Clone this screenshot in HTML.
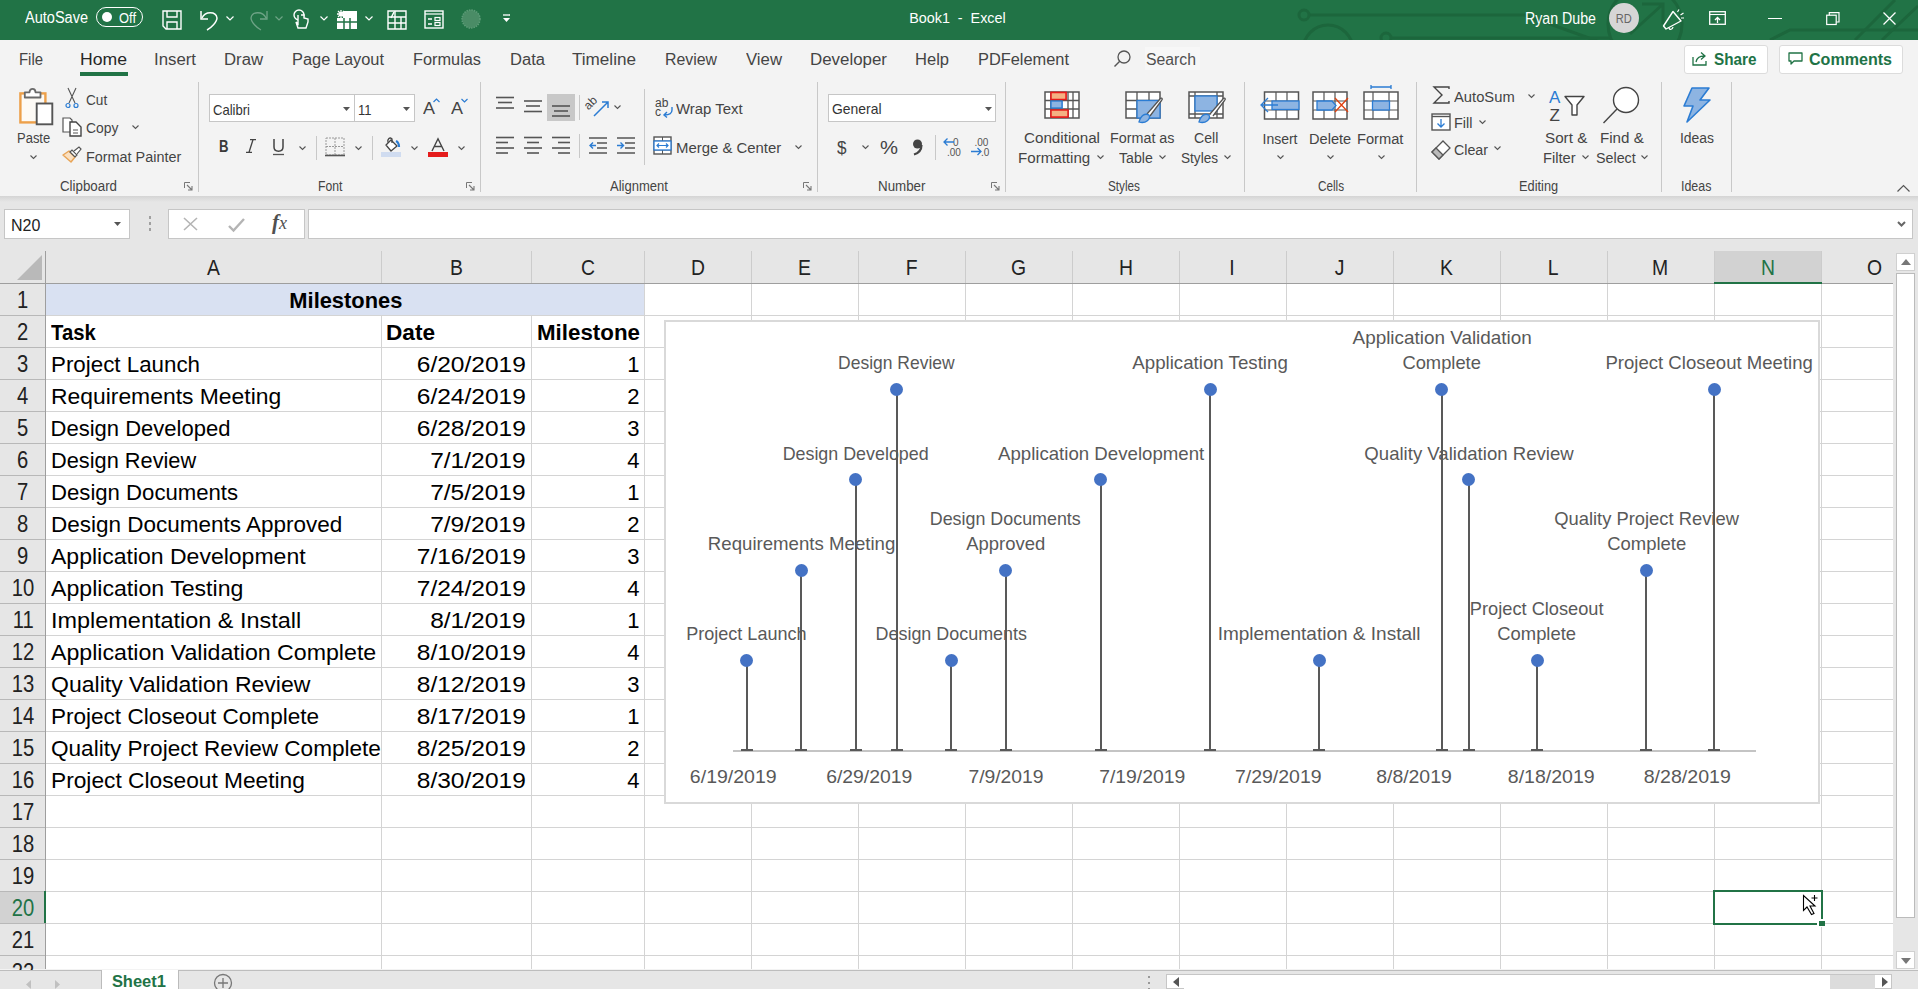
<!DOCTYPE html><html><head><meta charset="utf-8"><style>
html,body{margin:0;padding:0;}
body{width:1918px;height:989px;overflow:hidden;position:relative;background:#f3f3f3;font-family:"Liberation Sans",sans-serif;}
.t{position:absolute;white-space:nowrap;line-height:1.149;}
.b{position:absolute;}
svg.b{overflow:visible}
</style></head><body>
<div class="b" style="left:0px;top:0px;width:1918px;height:40px;background:#217346"></div>
<svg class="b" style="left:1280px;top:0px;" width="638" height="40" viewBox="0 0 638 40"><g stroke="#1c663c" stroke-width="3" fill="none"><path d="M29 15 H245 L320 42"/><circle cx="24" cy="15" r="5"/><circle cx="48" cy="50" r="25"/><circle cx="106" cy="38" r="5"/><path d="M111 38 H330"/><circle cx="365" cy="24" r="37"/><path d="M350 34 L382 5 M362 4 H383 V24"/><path d="M490 40 L510 30 H638"/><path d="M575 40 L615 0"/><path d="M602 40 L638 6"/></g></svg>
<div class="t" style="left:25.00px;top:8.96px;font-size:16px;color:#ffffff;transform:scaleX(0.9080);transform-origin:left 50%;">AutoSave</div>
<div class="b" style="left:96px;top:7px;width:47px;height:20px;border:1.3px solid #fff;border-radius:10px;box-sizing:border-box"></div>
<div class="b" style="left:102px;top:12px;width:10px;height:10px;background:#fff;border-radius:50%"></div>
<div class="t" style="left:119.00px;top:9.81px;font-size:14px;color:#ffffff;transform:scaleX(0.9231);transform-origin:left 50%;">Off</div>
<svg class="b" style="left:162px;top:10px;" width="20" height="20" viewBox="0 0 20 20"><path d="M1 1 H19 V19 H4 L1 16 Z" stroke="#fff" stroke-width="1.4" fill="none"/><path d="M5 1 V7 H15 V1" stroke="#fff" stroke-width="1.4" fill="none"/><path d="M5 19 V12 H15 V19" stroke="#fff" stroke-width="1.4" fill="none"/></svg>
<svg class="b" style="left:199px;top:9px;" width="20" height="21" viewBox="0 0 20 21"><path d="M3 9 C6 2 17 2 18 9 C18 13 12 19 8 21" stroke="#fff" stroke-width="1.5" fill="none"/><path d="M2 2 V10 H9" stroke="#fff" stroke-width="1.5" fill="none"/></svg>
<svg class="b" style="left:226px;top:16px;" width="8" height="5" viewBox="0 0 8 5"><path d="M0.5 0.5 L4 4 L7.5 0.5" stroke="#fff" stroke-width="1.2" fill="none" opacity="1"/></svg>
<svg class="b" style="left:249px;top:9px;" width="20" height="21" viewBox="0 0 20 21"><path d="M17 9 C14 2 3 2 2 9 C2 13 8 19 12 21" stroke="#fff" stroke-width="1.3" fill="none" opacity="0.35"/><path d="M18 2 V10 H11" stroke="#fff" stroke-width="1.3" fill="none" opacity="0.35"/></svg>
<svg class="b" style="left:275px;top:16px;" width="8" height="5" viewBox="0 0 8 5"><path d="M0.5 0.5 L4 4 L7.5 0.5" stroke="#fff" stroke-width="1.2" fill="none" opacity="0.35"/></svg>
<svg class="b" style="left:293px;top:9px;" width="16" height="21" viewBox="0 0 16 21"><circle cx="6" cy="6" r="5" stroke="#fff" stroke-width="1.4" fill="none"/><path d="M5 6 V15 L3 13 L5 19 H13 L15 13 V10 L11 9 V6 L8 6" stroke="#fff" stroke-width="1.4" fill="#217346"/></svg>
<svg class="b" style="left:320px;top:16px;" width="8" height="5" viewBox="0 0 8 5"><path d="M0.5 0.5 L4 4 L7.5 0.5" stroke="#fff" stroke-width="1.2" fill="none" opacity="1"/></svg>
<svg class="b" style="left:337px;top:10px;" width="20" height="19" viewBox="0 0 20 19"><rect x="6" y="1" width="14" height="18" fill="#fff"/><rect x="0" y="8" width="20" height="11" fill="#fff"/><path d="M0 12 H20 M7 8 V19 M13 8 V19" stroke="#217346" stroke-width="1.5"/><path d="M4 0 V8 M0 4 H8 M1 1 L7 7 M7 1 L1 7" stroke="#fff" stroke-width="1.3"/></svg>
<svg class="b" style="left:365px;top:16px;" width="8" height="5" viewBox="0 0 8 5"><path d="M0.5 0.5 L4 4 L7.5 0.5" stroke="#fff" stroke-width="1.2" fill="none" opacity="1"/></svg>
<svg class="b" style="left:387px;top:10px;" width="20" height="19" viewBox="0 0 20 19"><path d="M1 1 H19 V19 H1 Z M1 7 H19 M1 13 H19 M8 1 V19 M14 7 V19" stroke="#fff" stroke-width="1.4" fill="none"/><path d="M4 8 L7 2" stroke="#fff" stroke-width="1.5"/></svg>
<svg class="b" style="left:424px;top:10px;" width="20" height="19" viewBox="0 0 20 19"><rect x="1" y="1" width="18" height="17" stroke="#fff" stroke-width="1.4" fill="none"/><path d="M1 4 H19" stroke="#fff" stroke-width="1.2"/><path d="M4 9 H8 M4 14 H8" stroke="#fff" stroke-width="1.5"/><rect x="11" y="7.5" width="5" height="3" stroke="#fff" stroke-width="1.2" fill="none"/><rect x="11" y="12.5" width="5" height="3" stroke="#fff" stroke-width="1.2" fill="none"/></svg>
<svg class="b" style="left:461px;top:9px;" width="20" height="20" viewBox="0 0 20 20"><circle cx="10" cy="10" r="9" fill="#4a8c66" stroke="#5d9c78" stroke-width="1.5" stroke-dasharray="1.5 1"/></svg>
<svg class="b" style="left:502px;top:14px;" width="9" height="9" viewBox="0 0 9 9"><path d="M1 1 H8" stroke="#fff" stroke-width="1.3"/><path d="M1 4 L4.5 8 L8 4 Z" fill="#fff"/></svg>
<div class="t" style="left:906.56px;top:8.88px;font-size:15px;color:#ffffff;transform:scaleX(0.9566);transform-origin:center 50%;">Book1&nbsp;&nbsp;-&nbsp;&nbsp;Excel</div>
<div class="t" style="left:1525.00px;top:9.96px;font-size:16px;color:#ffffff;transform:scaleX(0.8870);transform-origin:left 50%;">Ryan Dube</div>
<div class="b" style="left:1609px;top:3px;width:30px;height:30px;background:#d6d6d6;border-radius:50%"></div>
<div class="t" style="left:1615.33px;top:12.65px;font-size:12px;color:#666;transform:scaleX(0.9231);transform-origin:center 50%;">RD</div>
<svg class="b" style="left:1662px;top:9px;" width="22" height="21" viewBox="0 0 22 21"><path d="M1.5 17 L4 20 L19 12 L11 2.5 Z" stroke="#fff" stroke-width="1.4" fill="none" stroke-linejoin="round"/><path d="M7 18.5 C7 21 10.5 21 11 18" stroke="#fff" stroke-width="1.3" fill="none"/><path d="M15.5 3 L17 0.5 M18.5 6 L21.5 4 M19 9 L22 9" stroke="#fff" stroke-width="1.2"/></svg>
<svg class="b" style="left:1709px;top:11px;" width="17" height="14" viewBox="0 0 17 14"><rect x="0.7" y="0.7" width="15.6" height="12.6" stroke="#fff" stroke-width="1.3" fill="none"/><path d="M0.7 3.5 H16.3" stroke="#fff" stroke-width="1.1"/><path d="M8.5 12 V6.5 M6 9 L8.5 6.5 L11 9" stroke="#fff" stroke-width="1.3" fill="none"/></svg>
<div class="b" style="left:1768px;top:18px;width:14px;height:1.2px;background:#fff"></div>
<svg class="b" style="left:1825.5px;top:11.5px;" width="14" height="13" viewBox="0 0 14 13"><rect x="0.7" y="3.2" width="9.5" height="9.3" stroke="#fff" stroke-width="1.2" fill="none"/><path d="M3.3 3.2 V0.7 H13 V10 H10.2" stroke="#fff" stroke-width="1.2" fill="none"/></svg>
<svg class="b" style="left:1883px;top:11.5px;" width="13" height="13" viewBox="0 0 13 13"><path d="M0.5 0.5 L12.5 12.5 M12.5 0.5 L0.5 12.5" stroke="#fff" stroke-width="1.3"/></svg>
<div class="b" style="left:0px;top:40px;width:1918px;height:156px;background:#f3f3f3"></div>
<div class="t" style="left:19.00px;top:50.96px;font-size:16px;color:#444444;transform:scaleX(0.9309);transform-origin:left 50%;">File</div>
<div class="t" style="left:80.00px;top:50.96px;font-size:16px;color:#262626;transform:scaleX(1.1012);transform-origin:left 50%;">Home</div>
<div class="t" style="left:154.00px;top:50.96px;font-size:16px;color:#444444;transform:scaleX(1.0496);transform-origin:left 50%;">Insert</div>
<div class="t" style="left:224.00px;top:50.96px;font-size:16px;color:#444444;transform:scaleX(1.0445);transform-origin:left 50%;">Draw</div>
<div class="t" style="left:292.00px;top:50.96px;font-size:16px;color:#444444;transform:scaleX(1.0239);transform-origin:left 50%;">Page Layout</div>
<div class="t" style="left:413.00px;top:50.96px;font-size:16px;color:#444444;transform:scaleX(1.0198);transform-origin:left 50%;">Formulas</div>
<div class="t" style="left:510.00px;top:50.96px;font-size:16px;color:#444444;transform:scaleX(1.0356);transform-origin:left 50%;">Data</div>
<div class="t" style="left:572.00px;top:50.96px;font-size:16px;color:#444444;transform:scaleX(1.0690);transform-origin:left 50%;">Timeline</div>
<div class="t" style="left:665.00px;top:50.96px;font-size:16px;color:#444444;transform:scaleX(0.9912);transform-origin:left 50%;">Review</div>
<div class="t" style="left:746.00px;top:50.96px;font-size:16px;color:#444444;transform:scaleX(1.0468);transform-origin:left 50%;">View</div>
<div class="t" style="left:810.00px;top:50.96px;font-size:16px;color:#444444;transform:scaleX(1.0558);transform-origin:left 50%;">Developer</div>
<div class="t" style="left:915.00px;top:50.96px;font-size:16px;color:#444444;transform:scaleX(1.0332);transform-origin:left 50%;">Help</div>
<div class="t" style="left:978.00px;top:50.96px;font-size:16px;color:#444444;transform:scaleX(1.0233);transform-origin:left 50%;">PDFelement</div>
<div class="b" style="left:80px;top:72px;width:48px;height:4px;background:#217346"></div>
<svg class="b" style="left:1113px;top:50px;" width="18" height="18" viewBox="0 0 18 18"><circle cx="11" cy="7" r="6" stroke="#555" stroke-width="1.3" fill="none"/><path d="M7 11 L1.5 16.5" stroke="#555" stroke-width="1.5"/></svg>
<div class="b" style="left:1145px;top:47px;width:55px;height:23px;background:#f7f7f7"></div>
<div class="t" style="left:1146.00px;top:50.96px;font-size:16px;color:#505050;transform:scaleX(0.9863);transform-origin:left 50%;">Search</div>
<div class="b" style="left:1684px;top:45px;width:84px;height:29px;background:#fff;border:1px solid #dcdcdc;border-radius:3px;box-sizing:border-box"></div>
<svg class="b" style="left:1692px;top:51px;" width="16" height="15" viewBox="0 0 16 15"><path d="M1 6 V14 H14 V10" stroke="#217346" stroke-width="1.3" fill="none"/><path d="M4 11 C5 6 8 5 12 5 M9 1.5 L13 5 L9 8.5" stroke="#217346" stroke-width="1.3" fill="none"/></svg>
<div class="t" style="left:1713.50px;top:50.04px;font-size:17px;color:#217346;font-weight:bold;transform:scaleX(0.8995);transform-origin:left 50%;">Share</div>
<div class="b" style="left:1779px;top:45px;width:124px;height:29px;background:#fff;border:1px solid #dcdcdc;border-radius:3px;box-sizing:border-box"></div>
<svg class="b" style="left:1788px;top:52px;" width="15" height="14" viewBox="0 0 15 14"><path d="M1 1 H14 V9 H6 L3 12 V9 H1 Z" stroke="#217346" stroke-width="1.3" fill="none" stroke-linejoin="round"/></svg>
<div class="t" style="left:1808.50px;top:50.04px;font-size:17px;color:#217346;font-weight:bold;transform:scaleX(0.9448);transform-origin:left 50%;">Comments</div>
<div class="b" style="left:198px;top:82px;width:1px;height:110px;background:#c8c8c8"></div>
<div class="b" style="left:480px;top:82px;width:1px;height:110px;background:#c8c8c8"></div>
<div class="b" style="left:817px;top:82px;width:1px;height:110px;background:#c8c8c8"></div>
<div class="b" style="left:1005px;top:82px;width:1px;height:110px;background:#c8c8c8"></div>
<div class="b" style="left:1244px;top:82px;width:1px;height:110px;background:#c8c8c8"></div>
<div class="b" style="left:1416px;top:82px;width:1px;height:110px;background:#c8c8c8"></div>
<div class="b" style="left:1661px;top:82px;width:1px;height:110px;background:#c8c8c8"></div>
<div class="b" style="left:1731px;top:82px;width:1px;height:110px;background:#c8c8c8"></div>
<svg class="b" style="left:18px;top:86px;" width="36" height="40" viewBox="0 0 36 40"><rect x="2.4" y="7.4" width="25" height="29" fill="#fdfaf5" stroke="#eda04a" stroke-width="2.4"/><path d="M6.8 11.5 V6.3 H11.5 C11.5 1.6 17.5 1.6 17.5 6.3 H22.5 V11.5 Z" fill="#fff" stroke="#6a6a6a" stroke-width="1.8" stroke-linejoin="round"/><rect x="18.7" y="17.5" width="15.6" height="20.8" fill="#fff" stroke="#555" stroke-width="1.9"/></svg>
<div class="t" style="left:16.60px;top:130.31px;font-size:14px;color:#444444;transform:scaleX(0.9274);transform-origin:left 50%;">Paste</div>
<svg class="b" style="left:29.5px;top:154.5px;" width="7" height="4" viewBox="0 0 7 4"><path d="M0.5 0.5 L3.5 3.5 L6.5 0.5" stroke="#555" stroke-width="1.1" fill="none"/></svg>
<svg class="b" style="left:65px;top:88px;" width="14" height="21" viewBox="0 0 14 21"><path d="M3 0 L10 15 M11 0 L4 15" stroke="#555" stroke-width="1.1"/><circle cx="3" cy="17.5" r="2" stroke="#2b7cd3" stroke-width="1.2" fill="none"/><circle cx="11" cy="17.5" r="2" stroke="#2b7cd3" stroke-width="1.2" fill="none"/></svg>
<div class="t" style="left:85.60px;top:91.51px;font-size:14px;color:#444444;transform:scaleX(0.9731);transform-origin:left 50%;">Cut</div>
<svg class="b" style="left:62px;top:117px;" width="20" height="20" viewBox="0 0 20 20"><path d="M1 1 H8 L10 3 V15 H1 Z" fill="#fff" stroke="#555" stroke-width="1.2"/><path d="M8 5 H14 L19 10 V19 H8 Z" fill="#fff" stroke="#444" stroke-width="1.4"/><path d="M11 13 H16 M11 16 H16" stroke="#555" stroke-width="1"/></svg>
<div class="t" style="left:85.60px;top:120.01px;font-size:14px;color:#444444;transform:scaleX(0.9913);transform-origin:left 50%;">Copy</div>
<svg class="b" style="left:131.5px;top:125.3px;" width="7" height="4" viewBox="0 0 7 4"><path d="M0.5 0.5 L3.5 3.5 L6.5 0.5" stroke="#555" stroke-width="1.1" fill="none"/></svg>
<svg class="b" style="left:62px;top:146px;" width="20" height="19" viewBox="0 0 20 19"><path d="M1 9 L9 16 L13 11 L7 5 Z" fill="#fbe0c0" stroke="#e8a558" stroke-width="1.5" stroke-linejoin="round"/><path d="M8 6 L13 11 L15 9 L10 4 Z" fill="#fff" stroke="#555" stroke-width="1.2"/><path d="M12 5 L17 1 L19 3 L15 8" fill="#fff" stroke="#555" stroke-width="1.2"/></svg>
<div class="t" style="left:85.60px;top:149.41px;font-size:14px;color:#444444;transform:scaleX(1.0282);transform-origin:left 50%;">Format Painter</div>
<div class="t" style="left:59.50px;top:178.41px;font-size:14px;color:#444444;transform:scaleX(0.9512);transform-origin:left 50%;">Clipboard</div>
<svg class="b" style="left:184px;top:182px;" width="9" height="9" viewBox="0 0 9 9"><path d="M0.5 6 V0.5 H6" stroke="#777" stroke-width="1" fill="none"/><path d="M3 3 L8 8 M8 4 V8 H4" stroke="#777" stroke-width="1.1" fill="none"/></svg>
<div class="b" style="left:209px;top:94px;width:146px;height:28px;background:#fff;border:1px solid #c6c6c6;box-sizing:border-box"></div>
<div class="t" style="left:212.50px;top:100.89px;font-size:15px;color:#333;transform:scaleX(0.8704);transform-origin:left 50%;">Calibri</div>
<svg class="b" style="left:343px;top:106.5px;" width="7" height="4" viewBox="0 0 7 4"><path d="M0 0 H7 L3.5 4 Z" fill="#555"/></svg>
<div class="b" style="left:354px;top:94px;width:61px;height:28px;background:#fff;border:1px solid #c6c6c6;box-sizing:border-box"></div>
<div class="t" style="left:358.00px;top:100.89px;font-size:15px;color:#333;transform:scaleX(0.8669);transform-origin:left 50%;">11</div>
<svg class="b" style="left:403px;top:106.5px;" width="7" height="4" viewBox="0 0 7 4"><path d="M0 0 H7 L3.5 4 Z" fill="#555"/></svg>
<div class="t" style="left:423.00px;top:99.96px;font-size:16px;color:#444444;transform:scaleX(1.1245);transform-origin:left 50%;">A</div>
<svg class="b" style="left:433px;top:98px;" width="7" height="5" viewBox="0 0 7 5"><path d="M0.5 4 L3.5 1 L6.5 4" stroke="#2b7cd3" stroke-width="1.2" fill="none"/></svg>
<div class="t" style="left:451.00px;top:99.96px;font-size:16px;color:#444444;transform:scaleX(1.1245);transform-origin:left 50%;">A</div>
<svg class="b" style="left:461px;top:98px;" width="7" height="5" viewBox="0 0 7 5"><path d="M0.5 1 L3.5 4 L6.5 1" stroke="#2b7cd3" stroke-width="1.2" fill="none"/></svg>
<div class="t" style="left:218.50px;top:137.04px;font-size:17px;color:#3a3a3a;font-weight:bold;transform:scaleX(0.7738);transform-origin:left 50%;">B</div>
<svg class="b" style="left:246px;top:139px;" width="10" height="14" viewBox="0 0 10 14"><path d="M4 0.7 H10 M0 13.3 H6 M7 0.7 L3 13.3" stroke="#444" stroke-width="1.3" fill="none"/></svg>
<svg class="b" style="left:272px;top:139px;" width="13" height="17" viewBox="0 0 13 17"><path d="M2 0 V8 C2 13.5 11 13.5 11 8 V0" stroke="#444" stroke-width="1.5" fill="none"/><path d="M1 15.5 H12" stroke="#555" stroke-width="1.3"/></svg>
<svg class="b" style="left:298.5px;top:145.6px;" width="7" height="4" viewBox="0 0 7 4"><path d="M0.5 0.5 L3.5 3.5 L6.5 0.5" stroke="#555" stroke-width="1.1" fill="none"/></svg>
<div class="b" style="left:316px;top:136px;width:1px;height:24px;background:#c8c8c8"></div>
<svg class="b" style="left:325px;top:137px;" width="20" height="20" viewBox="0 0 20 20"><path d="M1 1 H19 V18 H1 Z M10 1 V18 M1 9.5 H19" stroke="#999" stroke-width="1" stroke-dasharray="2 1" fill="none"/><path d="M0 18.5 H20" stroke="#555" stroke-width="1.6"/></svg>
<svg class="b" style="left:354.5px;top:145.6px;" width="7" height="4" viewBox="0 0 7 4"><path d="M0.5 0.5 L3.5 3.5 L6.5 0.5" stroke="#555" stroke-width="1.1" fill="none"/></svg>
<div class="b" style="left:372px;top:136px;width:1px;height:24px;background:#c8c8c8"></div>
<svg class="b" style="left:381px;top:136px;" width="21" height="22" viewBox="0 0 21 22"><path d="M5 9 L10 4 L16 10 L10 15 Z" fill="#fff" stroke="#444" stroke-width="1.3" stroke-linejoin="round"/><path d="M7 6.5 C6 3 9 0.5 11 3 L11 7" stroke="#444" stroke-width="1.3" fill="none"/><path d="M15 5 C17 6 18 8 18 11" stroke="#2b7cd3" stroke-width="2.2" fill="none"/><rect x="0" y="16" width="20" height="5" fill="#d0dcf0"/></svg>
<svg class="b" style="left:410.5px;top:145.6px;" width="7" height="4" viewBox="0 0 7 4"><path d="M0.5 0.5 L3.5 3.5 L6.5 0.5" stroke="#555" stroke-width="1.1" fill="none"/></svg>
<svg class="b" style="left:429px;top:138px;" width="18" height="13" viewBox="0 0 18 13"><path d="M3 13 L9 0.8 L15 13 M5.3 8.5 H12.7" stroke="#444" stroke-width="1.4" fill="none"/></svg>
<div class="b" style="left:428px;top:152px;width:20px;height:5px;background:#e51c1c"></div>
<svg class="b" style="left:457.5px;top:145.6px;" width="7" height="4" viewBox="0 0 7 4"><path d="M0.5 0.5 L3.5 3.5 L6.5 0.5" stroke="#555" stroke-width="1.1" fill="none"/></svg>
<div class="t" style="left:317.60px;top:178.41px;font-size:14px;color:#444444;transform:scaleX(0.8710);transform-origin:left 50%;">Font</div>
<svg class="b" style="left:466px;top:182px;" width="9" height="9" viewBox="0 0 9 9"><path d="M0.5 6 V0.5 H6" stroke="#777" stroke-width="1" fill="none"/><path d="M3 3 L8 8 M8 4 V8 H4" stroke="#777" stroke-width="1.1" fill="none"/></svg>
<div class="b" style="left:547px;top:94px;width:28px;height:27px;background:#c8c8c8"></div>
<svg class="b" style="left:496px;top:90px;" width="20" height="70" viewBox="0 0 20 70"><path d="M0 7.5 H18" stroke="#555" stroke-width="1.6"/><path d="M2 12.5 H16" stroke="#555" stroke-width="1.6"/><path d="M0 18 H18" stroke="#555" stroke-width="1.6"/></svg>
<svg class="b" style="left:524px;top:90px;" width="20" height="70" viewBox="0 0 20 70"><path d="M0 11 H18" stroke="#555" stroke-width="1.6"/><path d="M2 16 H16" stroke="#555" stroke-width="1.6"/><path d="M0 21.5 H18" stroke="#555" stroke-width="1.6"/></svg>
<svg class="b" style="left:552px;top:90px;" width="20" height="70" viewBox="0 0 20 70"><path d="M0 16 H18" stroke="#555" stroke-width="1.6"/><path d="M2 21 H16" stroke="#555" stroke-width="1.6"/><path d="M0 26 H18" stroke="#555" stroke-width="1.6"/></svg>
<div class="b" style="left:579px;top:95px;width:1px;height:25px;background:#c8c8c8"></div>
<svg class="b" style="left:587px;top:95px;" width="23" height="23" viewBox="0 0 23 23"><text x="0" y="0" font-size="12" fill="#444" font-family="Liberation Sans" transform="translate(1.5 15.5) rotate(-45)">ab</text><path d="M7 21 L21 7 M15 7 H21 V13" stroke="#2b7cd3" stroke-width="1.5" fill="none"/></svg>
<svg class="b" style="left:613.5px;top:105px;" width="7" height="4" viewBox="0 0 7 4"><path d="M0.5 0.5 L3.5 3.5 L6.5 0.5" stroke="#555" stroke-width="1.1" fill="none"/></svg>
<div class="b" style="left:644px;top:89px;width:1px;height:76px;background:#c8c8c8"></div>
<svg class="b" style="left:655px;top:98px;" width="19" height="19" viewBox="0 0 19 19"><text x="0" y="9" font-size="12" fill="#444" font-family="Liberation Sans">ab</text><text x="0" y="18" font-size="12" fill="#444" font-family="Liberation Sans">c</text><path d="M17 9 V12 C17 15 14 17 9.5 17 M12 14 L9 17 L12 19.5" stroke="#2b7cd3" stroke-width="1.4" fill="none"/></svg>
<div class="t" style="left:676.40px;top:100.81px;font-size:14px;color:#444444;transform:scaleX(1.0654);transform-origin:left 50%;">Wrap Text</div>
<svg class="b" style="left:496px;top:90px;" width="20" height="70" viewBox="0 0 20 70"><path d="M0 47.5 H18" stroke="#555" stroke-width="1.6"/><path d="M0 52.5 H12" stroke="#555" stroke-width="1.6"/><path d="M0 58 H18" stroke="#555" stroke-width="1.6"/><path d="M0 63 H12" stroke="#555" stroke-width="1.6"/></svg>
<svg class="b" style="left:524px;top:90px;" width="20" height="70" viewBox="0 0 20 70"><path d="M0 47.5 H18" stroke="#555" stroke-width="1.6"/><path d="M3 52.5 H15" stroke="#555" stroke-width="1.6"/><path d="M0 58 H18" stroke="#555" stroke-width="1.6"/><path d="M3 63 H15" stroke="#555" stroke-width="1.6"/></svg>
<svg class="b" style="left:552px;top:90px;" width="20" height="70" viewBox="0 0 20 70"><path d="M0 47.5 H18" stroke="#555" stroke-width="1.6"/><path d="M6 52.5 H18" stroke="#555" stroke-width="1.6"/><path d="M0 58 H18" stroke="#555" stroke-width="1.6"/><path d="M6 63 H18" stroke="#555" stroke-width="1.6"/></svg>
<div class="b" style="left:579px;top:134px;width:1px;height:24px;background:#c8c8c8"></div>
<svg class="b" style="left:589px;top:137px;" width="19" height="17" viewBox="0 0 19 17"><path d="M0 1 H18 M8 6 H18 M8 11 H18 M0 16 H18" stroke="#555" stroke-width="1.6"/><path d="M7 8.5 H1 M4 5.5 L1 8.5 L4 11.5" stroke="#2b7cd3" stroke-width="1.4" fill="none"/></svg>
<svg class="b" style="left:617px;top:137px;" width="19" height="17" viewBox="0 0 19 17"><path d="M0 1 H18 M8 6 H18 M8 11 H18 M0 16 H18" stroke="#555" stroke-width="1.6"/><path d="M0 8.5 H6 M3.5 5.5 L6.5 8.5 L3.5 11.5" stroke="#2b7cd3" stroke-width="1.4" fill="none"/></svg>
<svg class="b" style="left:653px;top:136px;" width="19" height="19" viewBox="0 0 19 19"><rect x="1" y="1" width="17" height="17" fill="#fff" stroke="#555" stroke-width="1.4"/><path d="M1 5 H18 M1 14 H18 M9.5 1 V5 M9.5 14 V18" stroke="#555" stroke-width="1"/><rect x="1" y="5" width="17" height="9" fill="#fff" stroke="#2b7cd3" stroke-width="1.3"/><path d="M4 9.5 H15 M6 7.5 L4 9.5 L6 11.5 M13 7.5 L15 9.5 L13 11.5" stroke="#2b7cd3" stroke-width="1.2" fill="none"/></svg>
<div class="t" style="left:676.40px;top:139.81px;font-size:14px;color:#444444;transform:scaleX(1.0645);transform-origin:left 50%;">Merge &amp; Center</div>
<svg class="b" style="left:794.5px;top:144.5px;" width="7" height="4" viewBox="0 0 7 4"><path d="M0.5 0.5 L3.5 3.5 L6.5 0.5" stroke="#555" stroke-width="1.1" fill="none"/></svg>
<div class="t" style="left:610.00px;top:178.41px;font-size:14px;color:#444444;transform:scaleX(0.9316);transform-origin:left 50%;">Alignment</div>
<svg class="b" style="left:803px;top:182px;" width="9" height="9" viewBox="0 0 9 9"><path d="M0.5 6 V0.5 H6" stroke="#777" stroke-width="1" fill="none"/><path d="M3 3 L8 8 M8 4 V8 H4" stroke="#777" stroke-width="1.1" fill="none"/></svg>
<div class="b" style="left:828px;top:94px;width:168px;height:28px;background:#fff;border:1px solid #c6c6c6;box-sizing:border-box"></div>
<div class="t" style="left:831.50px;top:100.29px;font-size:15px;color:#333;transform:scaleX(0.9276);transform-origin:left 50%;">General</div>
<svg class="b" style="left:985px;top:107px;" width="7" height="4" viewBox="0 0 7 4"><path d="M0 0 H7 L3.5 4 Z" fill="#555"/></svg>
<div class="t" style="left:836.80px;top:137.20px;font-size:19px;color:#444;transform:scaleX(0.8990);transform-origin:left 50%;">$</div>
<svg class="b" style="left:861.5px;top:145px;" width="7" height="4" viewBox="0 0 7 4"><path d="M0.5 0.5 L3.5 3.5 L6.5 0.5" stroke="#555" stroke-width="1.1" fill="none"/></svg>
<div class="t" style="left:880.00px;top:137.20px;font-size:19px;color:#444;transform:scaleX(1.0654);transform-origin:left 50%;">%</div>
<svg class="b" style="left:912px;top:139px;" width="11" height="16" viewBox="0 0 11 16"><circle cx="5.5" cy="5" r="4.5" fill="#444"/><path d="M9.5 6 C9.5 11 7 14 2 15.5" stroke="#444" stroke-width="2.2" fill="none"/></svg>
<div class="b" style="left:935px;top:135px;width:1px;height:25px;background:#c8c8c8"></div>
<svg class="b" style="left:943px;top:137px;" width="21" height="20" viewBox="0 0 21 20"><text x="10" y="8.5" font-size="10" fill="#555" font-family="Liberation Sans">0</text><text x="4" y="18.5" font-size="10" fill="#555" font-family="Liberation Sans">.00</text><path d="M1 5 H11 M4.5 1.5 L1 5 L4.5 8.5" stroke="#2b7cd3" stroke-width="1.3" fill="none"/></svg>
<svg class="b" style="left:971px;top:137px;" width="21" height="20" viewBox="0 0 21 20"><text x="3.5" y="8.5" font-size="10" fill="#555" font-family="Liberation Sans">.00</text><text x="10" y="18.5" font-size="10" fill="#555" font-family="Liberation Sans">.0</text><path d="M0 14.5 H10 M6.5 11 L10 14.5 L6.5 18" stroke="#2b7cd3" stroke-width="1.3" fill="none"/></svg>
<div class="t" style="left:877.50px;top:178.41px;font-size:14px;color:#444444;transform:scaleX(0.9539);transform-origin:left 50%;">Number</div>
<svg class="b" style="left:991px;top:182px;" width="9" height="9" viewBox="0 0 9 9"><path d="M0.5 6 V0.5 H6" stroke="#777" stroke-width="1" fill="none"/><path d="M3 3 L8 8 M8 4 V8 H4" stroke="#777" stroke-width="1.1" fill="none"/></svg>
<svg class="b" style="left:1044px;top:91px;" width="36" height="28" viewBox="0 0 36 28"><rect x="1" y="1" width="34" height="26" fill="#fff" stroke="#555" stroke-width="1.5"/><rect x="7" y="1.5" width="15" height="7" fill="#f4b183" stroke="#e81c1c" stroke-width="1.5"/><rect x="7" y="10" width="11" height="7" fill="#8db4e2" stroke="#2b7cd3" stroke-width="1.3"/><rect x="7" y="19" width="17" height="7" fill="#f4b183" stroke="#e81c1c" stroke-width="1.5"/><path d="M1 9.5 H35 M1 18 H35 M7 1 V27 M24 1 V27 M29 1 V27" stroke="#555" stroke-width="1.3" fill="none"/><rect x="7" y="1.5" width="15" height="7" fill="#f4b183" stroke="#e81c1c" stroke-width="1.5"/><rect x="7" y="10" width="11" height="7" fill="#8db4e2" stroke="#2b7cd3" stroke-width="1.3"/><rect x="7" y="19" width="17" height="7" fill="#f4b183" stroke="#e81c1c" stroke-width="1.5"/></svg>
<div class="t" style="left:1023.50px;top:130.41px;font-size:14px;color:#444444;transform:scaleX(1.0849);transform-origin:left 50%;">Conditional</div>
<div class="t" style="left:1018.40px;top:150.21px;font-size:14px;color:#444444;transform:scaleX(1.0790);transform-origin:left 50%;">Formatting</div>
<svg class="b" style="left:1096.5px;top:154.6px;" width="7" height="4" viewBox="0 0 7 4"><path d="M0.5 0.5 L3.5 3.5 L6.5 0.5" stroke="#555" stroke-width="1.1" fill="none"/></svg>
<svg class="b" style="left:1125px;top:91px;" width="38" height="34" viewBox="0 0 38 34"><rect x="1" y="1" width="34" height="26" fill="#fff" stroke="#555" stroke-width="1.5"/><path d="M1 9.5 H35 M1 18 H35 M12 1 V27 M24 1 V27" stroke="#555" stroke-width="1.3"/><rect x="12" y="9.5" width="23" height="17.5" fill="#8db4e2" stroke="#2b7cd3" stroke-width="1.3"/><path d="M22 23 L35 8 C37 6 38 8 36.5 9.5 L25 25" fill="#fff" stroke="#555" stroke-width="1.3"/><path d="M14 31 C16 24 20 22 24 24 C26 28 21 33 14 31 Z" fill="#8db4e2" stroke="#2b7cd3" stroke-width="1.3"/></svg>
<div class="t" style="left:1110.40px;top:130.41px;font-size:14px;color:#444444;transform:scaleX(1.0236);transform-origin:left 50%;">Format as</div>
<div class="t" style="left:1118.70px;top:150.21px;font-size:14px;color:#444444;transform:scaleX(1.0098);transform-origin:left 50%;">Table</div>
<svg class="b" style="left:1158.5px;top:154.6px;" width="7" height="4" viewBox="0 0 7 4"><path d="M0.5 0.5 L3.5 3.5 L6.5 0.5" stroke="#555" stroke-width="1.1" fill="none"/></svg>
<svg class="b" style="left:1188px;top:91px;" width="38" height="34" viewBox="0 0 38 34"><rect x="1" y="1" width="34" height="26" fill="#fff" stroke="#555" stroke-width="1.5"/><path d="M1 5 H35 M1 23 H35 M7 1 V27 M29 1 V27" stroke="#555" stroke-width="1.3"/><rect x="7" y="5" width="22" height="15" fill="#8db4e2" stroke="#2b7cd3" stroke-width="1.3"/><path d="M22 23 L35 8 C37 6 38 8 36.5 9.5 L25 25" fill="#fff" stroke="#555" stroke-width="1.3"/><path d="M11 31 C13 24 17 22 21 24 C23 28 18 33 11 31 Z" fill="#8db4e2" stroke="#2b7cd3" stroke-width="1.3"/></svg>
<div class="t" style="left:1194.00px;top:130.41px;font-size:14px;color:#444444;transform:scaleX(1.0075);transform-origin:left 50%;">Cell</div>
<div class="t" style="left:1180.60px;top:150.21px;font-size:14px;color:#444444;transform:scaleX(0.9705);transform-origin:left 50%;">Styles</div>
<svg class="b" style="left:1223.5px;top:154.6px;" width="7" height="4" viewBox="0 0 7 4"><path d="M0.5 0.5 L3.5 3.5 L6.5 0.5" stroke="#555" stroke-width="1.1" fill="none"/></svg>
<div class="t" style="left:1108.40px;top:178.41px;font-size:14px;color:#444444;transform:scaleX(0.8393);transform-origin:left 50%;">Styles</div>
<svg class="b" style="left:1262px;top:91px;" width="37" height="29" viewBox="0 0 37 29"><rect x="2.5" y="1" width="34" height="27" fill="#fff" stroke="#555" stroke-width="1.5"/><path d="M2.5 10 H36 M2.5 19 H36 M14 1 V28 M25 1 V28" stroke="#555" stroke-width="1.2"/><rect x="10" y="10" width="27" height="8.5" fill="#8db4e2" stroke="#2b7cd3" stroke-width="1.3"/><path d="M0 14 H16 M6 7 L-1 14 L6 21" stroke="#2b7cd3" stroke-width="1.3" fill="none"/></svg>
<div class="t" style="left:1262.50px;top:130.81px;font-size:14px;color:#444444;">Insert</div>
<svg class="b" style="left:1276.5px;top:154.5px;" width="7" height="4" viewBox="0 0 7 4"><path d="M0.5 0.5 L3.5 3.5 L6.5 0.5" stroke="#555" stroke-width="1.1" fill="none"/></svg>
<svg class="b" style="left:1312px;top:91px;" width="37" height="29" viewBox="0 0 37 29"><rect x="1" y="1" width="34" height="27" fill="#fff" stroke="#555" stroke-width="1.5"/><path d="M1 10 H35 M1 19 H35 M12 1 V28 M23 1 V28" stroke="#555" stroke-width="1.2"/><rect x="1" y="10" width="0.1" height="9" fill="#f3f3f3"/><path d="M5 10 H20 L24 14.5 L20 19 H5 Z" fill="#8db4e2" stroke="#2b7cd3" stroke-width="1.3"/><path d="M23 7 L36 21 M36 7 L23 21" stroke="#e0400e" stroke-width="1.3"/></svg>
<div class="t" style="left:1308.80px;top:130.81px;font-size:14px;color:#444444;transform:scaleX(1.0427);transform-origin:left 50%;">Delete</div>
<svg class="b" style="left:1326.5px;top:154.5px;" width="7" height="4" viewBox="0 0 7 4"><path d="M0.5 0.5 L3.5 3.5 L6.5 0.5" stroke="#555" stroke-width="1.1" fill="none"/></svg>
<svg class="b" style="left:1363px;top:85px;" width="36" height="35" viewBox="0 0 36 35"><path d="M8 2 H28 M8 0 V4 M28 0 V4" stroke="#2b7cd3" stroke-width="1.3"/><rect x="1" y="7" width="34" height="27" fill="#fff" stroke="#555" stroke-width="1.5"/><path d="M1 16 H35 M1 25 H35 M10 7 V34 M26 7 V34" stroke="#555" stroke-width="1.2"/><rect x="9.5" y="16" width="17" height="9" fill="#8db4e2" stroke="#2b7cd3" stroke-width="1.3"/></svg>
<div class="t" style="left:1357.40px;top:130.81px;font-size:14px;color:#444444;transform:scaleX(1.0465);transform-origin:left 50%;">Format</div>
<svg class="b" style="left:1377.5px;top:154.5px;" width="7" height="4" viewBox="0 0 7 4"><path d="M0.5 0.5 L3.5 3.5 L6.5 0.5" stroke="#555" stroke-width="1.1" fill="none"/></svg>
<div class="t" style="left:1317.70px;top:178.41px;font-size:14px;color:#444444;transform:scaleX(0.8387);transform-origin:left 50%;">Cells</div>
<svg class="b" style="left:1433px;top:86px;" width="17" height="18" viewBox="0 0 17 18"><path d="M16 3 V1 H1 L9 9 L1 17 H16 V15" stroke="#444" stroke-width="1.4" fill="none"/></svg>
<div class="t" style="left:1454.00px;top:88.71px;font-size:14px;color:#444444;transform:scaleX(1.0541);transform-origin:left 50%;">AutoSum</div>
<svg class="b" style="left:1527.5px;top:93.6px;" width="7" height="4" viewBox="0 0 7 4"><path d="M0.5 0.5 L3.5 3.5 L6.5 0.5" stroke="#555" stroke-width="1.1" fill="none"/></svg>
<svg class="b" style="left:1431px;top:113px;" width="20" height="18" viewBox="0 0 20 18"><rect x="1" y="1" width="18" height="16" fill="#fff" stroke="#555" stroke-width="1.4"/><path d="M1 3.5 H19" stroke="#555" stroke-width="1.4"/><path d="M10 6 V14 M6.5 10.5 L10 14 L13.5 10.5" stroke="#2b7cd3" stroke-width="1.3" fill="none"/></svg>
<div class="t" style="left:1454.00px;top:115.41px;font-size:14px;color:#444444;transform:scaleX(1.0289);transform-origin:left 50%;">Fill</div>
<svg class="b" style="left:1478.5px;top:119.5px;" width="7" height="4" viewBox="0 0 7 4"><path d="M0.5 0.5 L3.5 3.5 L6.5 0.5" stroke="#555" stroke-width="1.1" fill="none"/></svg>
<svg class="b" style="left:1431px;top:140px;" width="20" height="19" viewBox="0 0 20 19"><path d="M1 12 L12 1 L19 8 L8 19 Z" fill="#fff" stroke="#555" stroke-width="1.3"/><path d="M1 12 L5 8 L12 15 L8 19 Z" fill="#bbb" stroke="#555" stroke-width="1.3"/></svg>
<div class="t" style="left:1454.00px;top:142.41px;font-size:14px;color:#444444;transform:scaleX(1.0163);transform-origin:left 50%;">Clear</div>
<svg class="b" style="left:1493.5px;top:146.4px;" width="7" height="4" viewBox="0 0 7 4"><path d="M0.5 0.5 L3.5 3.5 L6.5 0.5" stroke="#555" stroke-width="1.1" fill="none"/></svg>
<svg class="b" style="left:1549px;top:88px;" width="37" height="34" viewBox="0 0 37 34"><text x="0" y="15" font-size="17" fill="#2b7cd3" font-family="Liberation Sans">A</text><text x="0.5" y="33" font-size="17" fill="#444" font-family="Liberation Sans">Z</text><path d="M16 8.5 H35 L28 17 V27 H23 V17 Z" fill="#fff" stroke="#444" stroke-width="1.4" stroke-linejoin="round"/></svg>
<div class="t" style="left:1545.40px;top:130.41px;font-size:14px;color:#444444;transform:scaleX(1.0873);transform-origin:left 50%;">Sort &amp;</div>
<div class="t" style="left:1543.40px;top:150.21px;font-size:14px;color:#444444;transform:scaleX(1.0478);transform-origin:left 50%;">Filter</div>
<svg class="b" style="left:1581.5px;top:154.6px;" width="7" height="4" viewBox="0 0 7 4"><path d="M0.5 0.5 L3.5 3.5 L6.5 0.5" stroke="#555" stroke-width="1.1" fill="none"/></svg>
<svg class="b" style="left:1602px;top:86px;" width="38" height="38" viewBox="0 0 38 38"><circle cx="24" cy="14" r="12.5" fill="#fff" stroke="#444" stroke-width="1.4"/><path d="M15 23 L1.5 37" stroke="#444" stroke-width="1.4"/></svg>
<div class="t" style="left:1600.00px;top:130.41px;font-size:14px;color:#444444;transform:scaleX(1.0825);transform-origin:left 50%;">Find &amp;</div>
<div class="t" style="left:1595.60px;top:150.21px;font-size:14px;color:#444444;transform:scaleX(1.0203);transform-origin:left 50%;">Select</div>
<svg class="b" style="left:1640.5px;top:154.6px;" width="7" height="4" viewBox="0 0 7 4"><path d="M0.5 0.5 L3.5 3.5 L6.5 0.5" stroke="#555" stroke-width="1.1" fill="none"/></svg>
<div class="t" style="left:1519.30px;top:178.41px;font-size:14px;color:#444444;transform:scaleX(0.9134);transform-origin:left 50%;">Editing</div>
<svg class="b" style="left:1683px;top:87px;" width="28" height="36" viewBox="0 0 28 36"><path d="M9 1 H26 L17 13 H27 L4 35 L10 19 H1 Z" fill="#8db4e2" stroke="#2b7cd3" stroke-width="1.6" stroke-linejoin="round"/></svg>
<div class="t" style="left:1679.60px;top:130.11px;font-size:14px;color:#444444;transform:scaleX(0.9927);transform-origin:left 50%;">Ideas</div>
<div class="t" style="left:1681.20px;top:178.41px;font-size:14px;color:#444444;transform:scaleX(0.8876);transform-origin:left 50%;">Ideas</div>
<svg class="b" style="left:1897px;top:185px;" width="13" height="7" viewBox="0 0 13 7"><path d="M0.5 6.5 L6.5 0.5 L12.5 6.5" stroke="#555" stroke-width="1.2" fill="none"/></svg>
<div class="b" style="left:0px;top:196px;width:1918px;height:56px;background:#e6e6e6"></div>
<div class="b" style="left:0px;top:196px;width:1918px;height:6px;background:linear-gradient(#d4d4d4,#e6e6e6)"></div>
<div class="b" style="left:4px;top:209px;width:126px;height:30px;background:#fff;border:1px solid #c6c6c6;box-sizing:border-box"></div>
<div class="t" style="left:11.00px;top:216.96px;font-size:16px;color:#222;">N20</div>
<svg class="b" style="left:114px;top:222px;" width="7" height="4" viewBox="0 0 7 4"><path d="M0 0 H7 L3.5 4 Z" fill="#555"/></svg>
<div class="b" style="left:148.5px;top:216px;width:2.5px;height:2.5px;background:#a0a0a0"></div>
<div class="b" style="left:148.5px;top:222px;width:2.5px;height:2.5px;background:#a0a0a0"></div>
<div class="b" style="left:148.5px;top:228px;width:2.5px;height:2.5px;background:#a0a0a0"></div>
<div class="b" style="left:168px;top:209px;width:137px;height:30px;background:#fff;border:1px solid #c6c6c6;box-sizing:border-box"></div>
<svg class="b" style="left:183px;top:217px;" width="15" height="14" viewBox="0 0 15 14"><path d="M1 1 L14 13 M14 1 L1 13" stroke="#b4b4b4" stroke-width="1.6"/></svg>
<svg class="b" style="left:228px;top:217px;" width="17" height="15" viewBox="0 0 17 15"><path d="M1 9 L5.5 13.5 L16 2" stroke="#b4b4b4" stroke-width="2.4" fill="none"/></svg>
<div class="t" style="left:272.00px;top:210.36px;font-size:21px;color:#505050;font-family:Liberation Serif,serif;"><i><b>f</b><span style="font-size:18px">x</span></i></div>
<div class="b" style="left:308px;top:209px;width:1605px;height:30px;background:#fff;border:1px solid #c6c6c6;box-sizing:border-box"></div>
<svg class="b" style="left:1897px;top:221px;" width="9" height="6" viewBox="0 0 9 6"><path d="M1 1 L4.5 4.5 L8 1" stroke="#666" stroke-width="2" fill="none"/></svg>
<div class="b" style="left:0px;top:251px;width:1918px;height:718px;background:#e6e6e6"></div>
<div class="b" style="left:46px;top:284px;width:1847px;height:685px;background:#fff"></div>
<div class="b" style="left:1714px;top:251px;width:108px;height:32px;background:#d2d2d2"></div>
<svg class="b" style="left:17px;top:255px;" width="25" height="25" viewBox="0 0 25 25"><path d="M25 0 L25 25 L0 25 Z" fill="#b9b9b9"/></svg>
<div class="b" style="left:381px;top:251px;width:1px;height:32px;background:#cccccc"></div>
<div class="b" style="left:531px;top:251px;width:1px;height:32px;background:#cccccc"></div>
<div class="b" style="left:644px;top:251px;width:1px;height:32px;background:#cccccc"></div>
<div class="b" style="left:751px;top:251px;width:1px;height:32px;background:#cccccc"></div>
<div class="b" style="left:858px;top:251px;width:1px;height:32px;background:#cccccc"></div>
<div class="b" style="left:965px;top:251px;width:1px;height:32px;background:#cccccc"></div>
<div class="b" style="left:1072px;top:251px;width:1px;height:32px;background:#cccccc"></div>
<div class="b" style="left:1179px;top:251px;width:1px;height:32px;background:#cccccc"></div>
<div class="b" style="left:1286px;top:251px;width:1px;height:32px;background:#cccccc"></div>
<div class="b" style="left:1393px;top:251px;width:1px;height:32px;background:#cccccc"></div>
<div class="b" style="left:1500px;top:251px;width:1px;height:32px;background:#cccccc"></div>
<div class="b" style="left:1607px;top:251px;width:1px;height:32px;background:#cccccc"></div>
<div class="b" style="left:1714px;top:251px;width:1px;height:32px;background:#cccccc"></div>
<div class="b" style="left:1821px;top:251px;width:1px;height:32px;background:#cccccc"></div>
<div class="b" style="left:0px;top:283px;width:1893px;height:1px;background:#9e9e9e"></div>
<div class="b" style="left:45px;top:251px;width:1px;height:718px;background:#9e9e9e"></div>
<div class="t" style="left:205.66px;top:255.44px;font-size:22px;color:#222;transform:scaleX(0.8800);transform-origin:center 50%;">A</div>
<div class="t" style="left:448.66px;top:255.44px;font-size:22px;color:#222;transform:scaleX(0.8800);transform-origin:center 50%;">B</div>
<div class="t" style="left:579.56px;top:255.44px;font-size:22px;color:#222;transform:scaleX(0.8800);transform-origin:center 50%;">C</div>
<div class="t" style="left:689.56px;top:255.44px;font-size:22px;color:#222;transform:scaleX(0.8800);transform-origin:center 50%;">D</div>
<div class="t" style="left:797.16px;top:255.44px;font-size:22px;color:#222;transform:scaleX(0.8800);transform-origin:center 50%;">E</div>
<div class="t" style="left:904.78px;top:255.44px;font-size:22px;color:#222;transform:scaleX(0.8800);transform-origin:center 50%;">F</div>
<div class="t" style="left:1009.94px;top:255.44px;font-size:22px;color:#222;transform:scaleX(0.8800);transform-origin:center 50%;">G</div>
<div class="t" style="left:1117.56px;top:255.44px;font-size:22px;color:#222;transform:scaleX(0.8800);transform-origin:center 50%;">H</div>
<div class="t" style="left:1229.44px;top:255.44px;font-size:22px;color:#222;transform:scaleX(0.8800);transform-origin:center 50%;">I</div>
<div class="t" style="left:1334.00px;top:255.44px;font-size:22px;color:#222;transform:scaleX(0.8800);transform-origin:center 50%;">J</div>
<div class="t" style="left:1439.16px;top:255.44px;font-size:22px;color:#222;transform:scaleX(0.8800);transform-origin:center 50%;">K</div>
<div class="t" style="left:1547.38px;top:255.44px;font-size:22px;color:#222;transform:scaleX(0.8800);transform-origin:center 50%;">L</div>
<div class="t" style="left:1651.34px;top:255.44px;font-size:22px;color:#222;transform:scaleX(0.8800);transform-origin:center 50%;">M</div>
<div class="t" style="left:1759.56px;top:255.44px;font-size:22px;color:#217346;transform:scaleX(0.8800);transform-origin:center 50%;">N</div>
<div class="t" style="left:1866.44px;top:255.44px;font-size:22px;color:#222;transform:scaleX(0.8800);transform-origin:center 50%;">O</div>
<div class="b" style="left:1714px;top:282px;width:108px;height:2px;background:#217346"></div>
<div class="b" style="left:46px;top:315px;width:1847px;height:1px;background:#d4d4d4"></div>
<div class="b" style="left:0px;top:315px;width:45px;height:1px;background:#b8b8b8"></div>
<div class="t" style="left:16.26px;top:287.06px;font-size:23.5px;color:#222;transform:scaleX(0.8600);transform-origin:center 50%;">1</div>
<div class="b" style="left:46px;top:347px;width:1847px;height:1px;background:#d4d4d4"></div>
<div class="b" style="left:0px;top:347px;width:45px;height:1px;background:#b8b8b8"></div>
<div class="t" style="left:16.26px;top:319.06px;font-size:23.5px;color:#222;transform:scaleX(0.8600);transform-origin:center 50%;">2</div>
<div class="b" style="left:46px;top:379px;width:1847px;height:1px;background:#d4d4d4"></div>
<div class="b" style="left:0px;top:379px;width:45px;height:1px;background:#b8b8b8"></div>
<div class="t" style="left:16.26px;top:351.06px;font-size:23.5px;color:#222;transform:scaleX(0.8600);transform-origin:center 50%;">3</div>
<div class="b" style="left:46px;top:411px;width:1847px;height:1px;background:#d4d4d4"></div>
<div class="b" style="left:0px;top:411px;width:45px;height:1px;background:#b8b8b8"></div>
<div class="t" style="left:16.26px;top:383.06px;font-size:23.5px;color:#222;transform:scaleX(0.8600);transform-origin:center 50%;">4</div>
<div class="b" style="left:46px;top:443px;width:1847px;height:1px;background:#d4d4d4"></div>
<div class="b" style="left:0px;top:443px;width:45px;height:1px;background:#b8b8b8"></div>
<div class="t" style="left:16.26px;top:415.06px;font-size:23.5px;color:#222;transform:scaleX(0.8600);transform-origin:center 50%;">5</div>
<div class="b" style="left:46px;top:475px;width:1847px;height:1px;background:#d4d4d4"></div>
<div class="b" style="left:0px;top:475px;width:45px;height:1px;background:#b8b8b8"></div>
<div class="t" style="left:16.26px;top:447.06px;font-size:23.5px;color:#222;transform:scaleX(0.8600);transform-origin:center 50%;">6</div>
<div class="b" style="left:46px;top:507px;width:1847px;height:1px;background:#d4d4d4"></div>
<div class="b" style="left:0px;top:507px;width:45px;height:1px;background:#b8b8b8"></div>
<div class="t" style="left:16.26px;top:479.06px;font-size:23.5px;color:#222;transform:scaleX(0.8600);transform-origin:center 50%;">7</div>
<div class="b" style="left:46px;top:539px;width:1847px;height:1px;background:#d4d4d4"></div>
<div class="b" style="left:0px;top:539px;width:45px;height:1px;background:#b8b8b8"></div>
<div class="t" style="left:16.26px;top:511.06px;font-size:23.5px;color:#222;transform:scaleX(0.8600);transform-origin:center 50%;">8</div>
<div class="b" style="left:46px;top:571px;width:1847px;height:1px;background:#d4d4d4"></div>
<div class="b" style="left:0px;top:571px;width:45px;height:1px;background:#b8b8b8"></div>
<div class="t" style="left:16.26px;top:543.06px;font-size:23.5px;color:#222;transform:scaleX(0.8600);transform-origin:center 50%;">9</div>
<div class="b" style="left:46px;top:603px;width:1847px;height:1px;background:#d4d4d4"></div>
<div class="b" style="left:0px;top:603px;width:45px;height:1px;background:#b8b8b8"></div>
<div class="t" style="left:9.73px;top:575.06px;font-size:23.5px;color:#222;transform:scaleX(0.8600);transform-origin:center 50%;">10</div>
<div class="b" style="left:46px;top:635px;width:1847px;height:1px;background:#d4d4d4"></div>
<div class="b" style="left:0px;top:635px;width:45px;height:1px;background:#b8b8b8"></div>
<div class="t" style="left:10.60px;top:607.06px;font-size:23.5px;color:#222;transform:scaleX(0.8600);transform-origin:center 50%;">11</div>
<div class="b" style="left:46px;top:667px;width:1847px;height:1px;background:#d4d4d4"></div>
<div class="b" style="left:0px;top:667px;width:45px;height:1px;background:#b8b8b8"></div>
<div class="t" style="left:9.73px;top:639.06px;font-size:23.5px;color:#222;transform:scaleX(0.8600);transform-origin:center 50%;">12</div>
<div class="b" style="left:46px;top:699px;width:1847px;height:1px;background:#d4d4d4"></div>
<div class="b" style="left:0px;top:699px;width:45px;height:1px;background:#b8b8b8"></div>
<div class="t" style="left:9.73px;top:671.06px;font-size:23.5px;color:#222;transform:scaleX(0.8600);transform-origin:center 50%;">13</div>
<div class="b" style="left:46px;top:731px;width:1847px;height:1px;background:#d4d4d4"></div>
<div class="b" style="left:0px;top:731px;width:45px;height:1px;background:#b8b8b8"></div>
<div class="t" style="left:9.73px;top:703.06px;font-size:23.5px;color:#222;transform:scaleX(0.8600);transform-origin:center 50%;">14</div>
<div class="b" style="left:46px;top:763px;width:1847px;height:1px;background:#d4d4d4"></div>
<div class="b" style="left:0px;top:763px;width:45px;height:1px;background:#b8b8b8"></div>
<div class="t" style="left:9.73px;top:735.06px;font-size:23.5px;color:#222;transform:scaleX(0.8600);transform-origin:center 50%;">15</div>
<div class="b" style="left:46px;top:795px;width:1847px;height:1px;background:#d4d4d4"></div>
<div class="b" style="left:0px;top:795px;width:45px;height:1px;background:#b8b8b8"></div>
<div class="t" style="left:9.73px;top:767.06px;font-size:23.5px;color:#222;transform:scaleX(0.8600);transform-origin:center 50%;">16</div>
<div class="b" style="left:46px;top:827px;width:1847px;height:1px;background:#d4d4d4"></div>
<div class="b" style="left:0px;top:827px;width:45px;height:1px;background:#b8b8b8"></div>
<div class="t" style="left:9.73px;top:799.06px;font-size:23.5px;color:#222;transform:scaleX(0.8600);transform-origin:center 50%;">17</div>
<div class="b" style="left:46px;top:859px;width:1847px;height:1px;background:#d4d4d4"></div>
<div class="b" style="left:0px;top:859px;width:45px;height:1px;background:#b8b8b8"></div>
<div class="t" style="left:9.73px;top:831.06px;font-size:23.5px;color:#222;transform:scaleX(0.8600);transform-origin:center 50%;">18</div>
<div class="b" style="left:46px;top:891px;width:1847px;height:1px;background:#d4d4d4"></div>
<div class="b" style="left:0px;top:891px;width:45px;height:1px;background:#b8b8b8"></div>
<div class="t" style="left:9.73px;top:863.06px;font-size:23.5px;color:#222;transform:scaleX(0.8600);transform-origin:center 50%;">19</div>
<div class="b" style="left:46px;top:923px;width:1847px;height:1px;background:#d4d4d4"></div>
<div class="b" style="left:0px;top:923px;width:45px;height:1px;background:#b8b8b8"></div>
<div class="b" style="left:0px;top:892px;width:45px;height:31px;background:#d2d2d2"></div>
<div class="t" style="left:9.73px;top:895.06px;font-size:23.5px;color:#217346;transform:scaleX(0.8600);transform-origin:center 50%;">20</div>
<div class="b" style="left:46px;top:955px;width:1847px;height:1px;background:#d4d4d4"></div>
<div class="b" style="left:0px;top:955px;width:45px;height:1px;background:#b8b8b8"></div>
<div class="t" style="left:9.73px;top:927.06px;font-size:23.5px;color:#222;transform:scaleX(0.8600);transform-origin:center 50%;">21</div>
<div class="t" style="left:9.73px;top:959.06px;font-size:23.5px;color:#222;transform:scaleX(0.8600);transform-origin:center 50%;">22</div>
<div class="b" style="left:381px;top:284px;width:1px;height:685px;background:#d4d4d4"></div>
<div class="b" style="left:531px;top:284px;width:1px;height:685px;background:#d4d4d4"></div>
<div class="b" style="left:644px;top:284px;width:1px;height:685px;background:#d4d4d4"></div>
<div class="b" style="left:751px;top:284px;width:1px;height:685px;background:#d4d4d4"></div>
<div class="b" style="left:858px;top:284px;width:1px;height:685px;background:#d4d4d4"></div>
<div class="b" style="left:965px;top:284px;width:1px;height:685px;background:#d4d4d4"></div>
<div class="b" style="left:1072px;top:284px;width:1px;height:685px;background:#d4d4d4"></div>
<div class="b" style="left:1179px;top:284px;width:1px;height:685px;background:#d4d4d4"></div>
<div class="b" style="left:1286px;top:284px;width:1px;height:685px;background:#d4d4d4"></div>
<div class="b" style="left:1393px;top:284px;width:1px;height:685px;background:#d4d4d4"></div>
<div class="b" style="left:1500px;top:284px;width:1px;height:685px;background:#d4d4d4"></div>
<div class="b" style="left:1607px;top:284px;width:1px;height:685px;background:#d4d4d4"></div>
<div class="b" style="left:1714px;top:284px;width:1px;height:685px;background:#d4d4d4"></div>
<div class="b" style="left:1821px;top:284px;width:1px;height:685px;background:#d4d4d4"></div>
<div class="b" style="left:46px;top:284px;width:598px;height:31px;background:#d9e1f2"></div>
<div class="t" style="left:288.65px;top:288.44px;font-size:22px;color:#000;font-weight:bold;transform:scaleX(0.9939);transform-origin:center 50%;">Milestones</div>
<div class="t" style="left:50.60px;top:320.44px;font-size:22px;color:#000;font-weight:bold;transform:scaleX(0.9214);transform-origin:left 50%;">Task</div>
<div class="t" style="left:386.40px;top:320.44px;font-size:22px;color:#000;font-weight:bold;transform:scaleX(1.0276);transform-origin:left 50%;">Date</div>
<div class="t" style="left:537.00px;top:320.44px;font-size:22px;color:#000;font-weight:bold;transform:scaleX(1.0151);transform-origin:left 50%;">Milestone</div>
<div class="t" style="left:50.60px;top:352.44px;font-size:22px;color:#000;transform:scaleX(1.0152);transform-origin:left 50%;">Project Launch</div>
<div class="t" style="left:428.12px;top:352.44px;font-size:22px;color:#000;transform:scaleX(1.1150);transform-origin:right 50%;">6/20/2019</div>
<div class="t" style="left:627.26px;top:352.44px;font-size:22px;color:#000;">1</div>
<div class="t" style="left:50.60px;top:384.44px;font-size:22px;color:#000;transform:scaleX(1.0400);transform-origin:left 50%;">Requirements Meeting</div>
<div class="t" style="left:428.12px;top:384.44px;font-size:22px;color:#000;transform:scaleX(1.1150);transform-origin:right 50%;">6/24/2019</div>
<div class="t" style="left:627.26px;top:384.44px;font-size:22px;color:#000;">2</div>
<div class="t" style="left:50.60px;top:416.44px;font-size:22px;color:#000;">Design Developed</div>
<div class="t" style="left:428.12px;top:416.44px;font-size:22px;color:#000;transform:scaleX(1.1150);transform-origin:right 50%;">6/28/2019</div>
<div class="t" style="left:627.26px;top:416.44px;font-size:22px;color:#000;">3</div>
<div class="t" style="left:50.60px;top:448.44px;font-size:22px;color:#000;transform:scaleX(0.9896);transform-origin:left 50%;">Design Review</div>
<div class="t" style="left:440.36px;top:448.44px;font-size:22px;color:#000;transform:scaleX(1.1150);transform-origin:right 50%;">7/1/2019</div>
<div class="t" style="left:627.26px;top:448.44px;font-size:22px;color:#000;">4</div>
<div class="t" style="left:50.60px;top:480.44px;font-size:22px;color:#000;transform:scaleX(1.0066);transform-origin:left 50%;">Design Documents</div>
<div class="t" style="left:440.36px;top:480.44px;font-size:22px;color:#000;transform:scaleX(1.1150);transform-origin:right 50%;">7/5/2019</div>
<div class="t" style="left:627.26px;top:480.44px;font-size:22px;color:#000;">1</div>
<div class="t" style="left:50.60px;top:512.44px;font-size:22px;color:#000;transform:scaleX(1.0220);transform-origin:left 50%;">Design Documents Approved</div>
<div class="t" style="left:440.36px;top:512.44px;font-size:22px;color:#000;transform:scaleX(1.1150);transform-origin:right 50%;">7/9/2019</div>
<div class="t" style="left:627.26px;top:512.44px;font-size:22px;color:#000;">2</div>
<div class="t" style="left:50.60px;top:544.44px;font-size:22px;color:#000;transform:scaleX(1.0461);transform-origin:left 50%;">Application Development</div>
<div class="t" style="left:428.12px;top:544.44px;font-size:22px;color:#000;transform:scaleX(1.1150);transform-origin:right 50%;">7/16/2019</div>
<div class="t" style="left:627.26px;top:544.44px;font-size:22px;color:#000;">3</div>
<div class="t" style="left:50.60px;top:576.44px;font-size:22px;color:#000;transform:scaleX(1.0511);transform-origin:left 50%;">Application Testing</div>
<div class="t" style="left:428.12px;top:576.44px;font-size:22px;color:#000;transform:scaleX(1.1150);transform-origin:right 50%;">7/24/2019</div>
<div class="t" style="left:627.26px;top:576.44px;font-size:22px;color:#000;">4</div>
<div class="t" style="left:50.60px;top:608.44px;font-size:22px;color:#000;transform:scaleX(1.0656);transform-origin:left 50%;">Implementation &amp; Install</div>
<div class="t" style="left:440.36px;top:608.44px;font-size:22px;color:#000;transform:scaleX(1.1150);transform-origin:right 50%;">8/1/2019</div>
<div class="t" style="left:627.26px;top:608.44px;font-size:22px;color:#000;">1</div>
<div class="t" style="left:50.60px;top:640.44px;font-size:22px;color:#000;transform:scaleX(1.0524);transform-origin:left 50%;">Application Validation Complete</div>
<div class="t" style="left:428.12px;top:640.44px;font-size:22px;color:#000;transform:scaleX(1.1150);transform-origin:right 50%;">8/10/2019</div>
<div class="t" style="left:627.26px;top:640.44px;font-size:22px;color:#000;">4</div>
<div class="t" style="left:50.60px;top:672.44px;font-size:22px;color:#000;transform:scaleX(1.0467);transform-origin:left 50%;">Quality Validation Review</div>
<div class="t" style="left:428.12px;top:672.44px;font-size:22px;color:#000;transform:scaleX(1.1150);transform-origin:right 50%;">8/12/2019</div>
<div class="t" style="left:627.26px;top:672.44px;font-size:22px;color:#000;">3</div>
<div class="t" style="left:50.60px;top:704.44px;font-size:22px;color:#000;transform:scaleX(1.0241);transform-origin:left 50%;">Project Closeout Complete</div>
<div class="t" style="left:428.12px;top:704.44px;font-size:22px;color:#000;transform:scaleX(1.1150);transform-origin:right 50%;">8/17/2019</div>
<div class="t" style="left:627.26px;top:704.44px;font-size:22px;color:#000;">1</div>
<div class="t" style="left:50.60px;top:736.44px;font-size:22px;color:#000;transform:scaleX(1.0259);transform-origin:left 50%;">Quality Project Review Complete</div>
<div class="t" style="left:428.12px;top:736.44px;font-size:22px;color:#000;transform:scaleX(1.1150);transform-origin:right 50%;">8/25/2019</div>
<div class="t" style="left:627.26px;top:736.44px;font-size:22px;color:#000;">2</div>
<div class="t" style="left:50.60px;top:768.44px;font-size:22px;color:#000;transform:scaleX(1.0330);transform-origin:left 50%;">Project Closeout Meeting</div>
<div class="t" style="left:428.12px;top:768.44px;font-size:22px;color:#000;transform:scaleX(1.1150);transform-origin:right 50%;">8/30/2019</div>
<div class="t" style="left:627.26px;top:768.44px;font-size:22px;color:#000;">4</div>
<div class="b" style="left:44px;top:891px;width:2px;height:32px;background:#217346"></div>
<div class="b" style="left:1713px;top:890px;width:110px;height:35px;border:2px solid #217346;box-sizing:border-box"></div>
<div class="b" style="left:1817px;top:919px;width:8px;height:8px;background:#fff"></div>
<div class="b" style="left:1819px;top:921px;width:5.5px;height:5px;background:#217346"></div>
<svg class="b" style="left:1802px;top:894px;" width="18" height="22" viewBox="0 0 18 22"><path d="M1.5 1.5 V16.5 L5 13 L9.5 20.5 L12 19.5 L8 12 H13 Z" fill="#fff" stroke="#000" stroke-width="1.1" stroke-linejoin="miter"/><path d="M12.5 1 V7 M9.5 4 H15.5" stroke="#000" stroke-width="1.1"/></svg>
<div class="b" style="left:1893px;top:251px;width:25px;height:718px;background:#e6e6e6"></div>
<div class="b" style="left:1896px;top:253px;width:19px;height:18px;background:#fff;border:1px solid #d0d0d0;box-sizing:border-box"></div>
<svg class="b" style="left:1900px;top:258px;" width="12" height="8" viewBox="0 0 12 8"><path d="M6 1 L11 7 L1 7 Z" fill="#777"/></svg>
<div class="b" style="left:1896px;top:273px;width:19px;height:645px;background:#fff;border:1px solid #bbb;box-sizing:border-box"></div>
<div class="b" style="left:1896px;top:951px;width:19px;height:18px;background:#fff;border:1px solid #d0d0d0;box-sizing:border-box"></div>
<svg class="b" style="left:1900px;top:957px;" width="12" height="8" viewBox="0 0 12 8"><path d="M1 1 L11 1 L6 7 Z" fill="#777"/></svg>
<div class="b" style="left:0px;top:970px;width:1918px;height:19px;background:#e6e6e6"></div>
<div class="b" style="left:0px;top:970px;width:1918px;height:1px;background:#bdbdbd"></div>
<div class="b" style="left:101px;top:970px;width:78px;height:19px;background:#fff;border-left:1px solid #bbb;border-right:1px solid #bbb;box-sizing:border-box"></div>
<div class="t" style="left:111.13px;top:972.04px;font-size:17px;color:#217346;font-weight:bold;transform:scaleX(0.9686);transform-origin:center 50%;">Sheet1</div>
<svg class="b" style="left:213px;top:973px;" width="20" height="20" viewBox="0 0 20 20"><circle cx="10" cy="10" r="8.5" stroke="#777" stroke-width="1.3" fill="none"/><path d="M10 5 V15 M5 10 H15" stroke="#777" stroke-width="1.3"/></svg>
<svg class="b" style="left:26px;top:980px;" width="5" height="9" viewBox="0 0 5 9"><path d="M5 0 L0 4.5 L5 9 Z" fill="#c0c0c0"/></svg>
<svg class="b" style="left:55px;top:980px;" width="5" height="9" viewBox="0 0 5 9"><path d="M0 0 L5 4.5 L0 9 Z" fill="#c0c0c0"/></svg>
<div class="b" style="left:1166px;top:974px;width:726px;height:15px;background:#fff;border:1px solid #c6c6c6;box-sizing:border-box"></div>
<div class="b" style="left:1184px;top:976px;width:646px;height:13px;background:#fff"></div>
<div class="b" style="left:1830px;top:975px;width:45px;height:14px;background:#dcdcdc"></div>
<svg class="b" style="left:1172px;top:977px;" width="8" height="10" viewBox="0 0 8 10"><path d="M7 0 L1 5 L7 10 Z" fill="#555"/></svg>
<svg class="b" style="left:1881px;top:977px;" width="8" height="10" viewBox="0 0 8 10"><path d="M1 0 L7 5 L1 10 Z" fill="#555"/></svg>
<div class="b" style="left:1148px;top:976px;width:2px;height:2px;background:#999"></div>
<div class="b" style="left:1148px;top:982px;width:2px;height:2px;background:#999"></div>
<div class="b" style="left:1148px;top:988px;width:2px;height:2px;background:#999"></div>
<div class="b" style="left:664px;top:320px;width:1156px;height:484px;background:#fff;border:2px solid #d9d9d9;box-sizing:border-box"></div>
<div class="b" style="left:733px;top:750px;width:1023px;height:2px;background:#c4c4c4"></div>
<div class="t" style="left:690.71px;top:765.80px;font-size:19px;color:#595959;transform:scaleX(1.0269);transform-origin:center 50%;">6/19/2019</div>
<div class="t" style="left:827.01px;top:765.80px;font-size:19px;color:#595959;transform:scaleX(1.0198);transform-origin:center 50%;">6/29/2019</div>
<div class="t" style="left:968.59px;top:765.80px;font-size:19px;color:#595959;transform:scaleX(1.0167);transform-origin:center 50%;">7/9/2019</div>
<div class="t" style="left:1099.61px;top:765.80px;font-size:19px;color:#595959;transform:scaleX(1.0198);transform-origin:center 50%;">7/19/2019</div>
<div class="t" style="left:1235.91px;top:765.80px;font-size:19px;color:#595959;transform:scaleX(1.0257);transform-origin:center 50%;">7/29/2019</div>
<div class="t" style="left:1377.49px;top:765.80px;font-size:19px;color:#595959;transform:scaleX(1.0221);transform-origin:center 50%;">8/8/2019</div>
<div class="t" style="left:1508.51px;top:765.80px;font-size:19px;color:#595959;transform:scaleX(1.0280);transform-origin:center 50%;">8/18/2019</div>
<div class="t" style="left:1644.81px;top:765.80px;font-size:19px;color:#595959;transform:scaleX(1.0304);transform-origin:center 50%;">8/28/2019</div>
<div class="b" style="left:746px;top:660px;width:2px;height:90px;background:#595959"></div>
<div class="b" style="left:741px;top:749px;width:12px;height:2px;background:#595959"></div>
<div class="b" style="left:740.1px;top:653.9000000000001px;width:13px;height:13px;background:#4472c4;border-radius:50%"></div>
<div class="t" style="left:683.22px;top:623.10px;font-size:19px;color:#595959;transform:scaleX(0.9499);transform-origin:center 50%;">Project Launch</div>
<div class="b" style="left:800px;top:570px;width:2px;height:180px;background:#595959"></div>
<div class="b" style="left:795px;top:749px;width:12px;height:2px;background:#595959"></div>
<div class="b" style="left:794.62px;top:563.6px;width:13px;height:13px;background:#4472c4;border-radius:50%"></div>
<div class="t" style="left:705.54px;top:532.80px;font-size:19px;color:#595959;transform:scaleX(0.9809);transform-origin:center 50%;">Requirements Meeting</div>
<div class="b" style="left:855px;top:480px;width:2px;height:270px;background:#595959"></div>
<div class="b" style="left:850px;top:749px;width:12px;height:2px;background:#595959"></div>
<div class="b" style="left:849.14px;top:473.30000000000007px;width:13px;height:13px;background:#4472c4;border-radius:50%"></div>
<div class="t" style="left:778.00px;top:442.50px;font-size:19px;color:#595959;transform:scaleX(0.9403);transform-origin:center 50%;">Design Developed</div>
<div class="b" style="left:896px;top:390px;width:2px;height:360px;background:#595959"></div>
<div class="b" style="left:891px;top:749px;width:12px;height:2px;background:#595959"></div>
<div class="b" style="left:890.03px;top:383.00000000000006px;width:13px;height:13px;background:#4472c4;border-radius:50%"></div>
<div class="t" style="left:833.17px;top:352.20px;font-size:19px;color:#595959;transform:scaleX(0.9201);transform-origin:center 50%;">Design Review</div>
<div class="b" style="left:950px;top:660px;width:2px;height:90px;background:#595959"></div>
<div class="b" style="left:945px;top:749px;width:12px;height:2px;background:#595959"></div>
<div class="b" style="left:944.5500000000001px;top:653.9000000000001px;width:13px;height:13px;background:#4472c4;border-radius:50%"></div>
<div class="t" style="left:870.79px;top:623.10px;font-size:19px;color:#595959;transform:scaleX(0.9438);transform-origin:center 50%;">Design Documents</div>
<div class="b" style="left:1005px;top:570px;width:2px;height:180px;background:#595959"></div>
<div class="b" style="left:1000px;top:749px;width:12px;height:2px;background:#595959"></div>
<div class="b" style="left:999.07px;top:563.6px;width:13px;height:13px;background:#4472c4;border-radius:50%"></div>
<div class="t" style="left:964.90px;top:532.80px;font-size:19px;color:#595959;transform:scaleX(0.9713);transform-origin:center 50%;">Approved</div>
<div class="t" style="left:925.31px;top:507.80px;font-size:19px;color:#595959;transform:scaleX(0.9407);transform-origin:center 50%;">Design Documents</div>
<div class="b" style="left:1100px;top:480px;width:2px;height:270px;background:#595959"></div>
<div class="b" style="left:1095px;top:749px;width:12px;height:2px;background:#595959"></div>
<div class="b" style="left:1094.48px;top:473.30000000000007px;width:13px;height:13px;background:#4472c4;border-radius:50%"></div>
<div class="t" style="left:995.89px;top:442.50px;font-size:19px;color:#595959;transform:scaleX(0.9815);transform-origin:center 50%;">Application Development</div>
<div class="b" style="left:1209px;top:390px;width:2px;height:360px;background:#595959"></div>
<div class="b" style="left:1204px;top:749px;width:12px;height:2px;background:#595959"></div>
<div class="b" style="left:1203.52px;top:383.00000000000006px;width:13px;height:13px;background:#4472c4;border-radius:50%"></div>
<div class="t" style="left:1130.97px;top:352.20px;font-size:19px;color:#595959;transform:scaleX(0.9836);transform-origin:center 50%;">Application Testing</div>
<div class="b" style="left:1318px;top:660px;width:2px;height:90px;background:#595959"></div>
<div class="b" style="left:1313px;top:749px;width:12px;height:2px;background:#595959"></div>
<div class="b" style="left:1312.56px;top:653.9000000000001px;width:13px;height:13px;background:#4472c4;border-radius:50%"></div>
<div class="t" style="left:1217.67px;top:623.10px;font-size:19px;color:#595959;">Implementation &amp; Install</div>
<div class="b" style="left:1441px;top:390px;width:2px;height:360px;background:#595959"></div>
<div class="b" style="left:1436px;top:749px;width:12px;height:2px;background:#595959"></div>
<div class="b" style="left:1435.23px;top:383.00000000000006px;width:13px;height:13px;background:#4472c4;border-radius:50%"></div>
<div class="t" style="left:1401.07px;top:352.20px;font-size:19px;color:#595959;transform:scaleX(0.9653);transform-origin:center 50%;">Complete</div>
<div class="t" style="left:1351.59px;top:327.20px;font-size:19px;color:#595959;transform:scaleX(0.9940);transform-origin:center 50%;">Application Validation</div>
<div class="b" style="left:1468px;top:480px;width:2px;height:270px;background:#595959"></div>
<div class="b" style="left:1463px;top:749px;width:12px;height:2px;background:#595959"></div>
<div class="b" style="left:1462.4900000000002px;top:473.30000000000007px;width:13px;height:13px;background:#4472c4;border-radius:50%"></div>
<div class="t" style="left:1361.97px;top:442.50px;font-size:19px;color:#595959;transform:scaleX(0.9779);transform-origin:center 50%;">Quality Validation Review</div>
<div class="b" style="left:1536px;top:660px;width:2px;height:90px;background:#595959"></div>
<div class="b" style="left:1531px;top:749px;width:12px;height:2px;background:#595959"></div>
<div class="b" style="left:1530.64px;top:653.9000000000001px;width:13px;height:13px;background:#4472c4;border-radius:50%"></div>
<div class="t" style="left:1496.48px;top:623.10px;font-size:19px;color:#595959;transform:scaleX(0.9690);transform-origin:center 50%;">Complete</div>
<div class="t" style="left:1467.44px;top:598.10px;font-size:19px;color:#595959;transform:scaleX(0.9591);transform-origin:center 50%;">Project Closeout</div>
<div class="b" style="left:1645px;top:570px;width:2px;height:180px;background:#595959"></div>
<div class="b" style="left:1640px;top:749px;width:12px;height:2px;background:#595959"></div>
<div class="b" style="left:1639.68px;top:563.6px;width:13px;height:13px;background:#4472c4;border-radius:50%"></div>
<div class="t" style="left:1605.52px;top:532.80px;font-size:19px;color:#595959;transform:scaleX(0.9715);transform-origin:center 50%;">Complete</div>
<div class="t" style="left:1550.62px;top:507.80px;font-size:19px;color:#595959;transform:scaleX(0.9664);transform-origin:center 50%;">Quality Project Review</div>
<div class="b" style="left:1713px;top:390px;width:2px;height:360px;background:#595959"></div>
<div class="b" style="left:1708px;top:749px;width:12px;height:2px;background:#595959"></div>
<div class="b" style="left:1707.83px;top:383.00000000000006px;width:13px;height:13px;background:#4472c4;border-radius:50%"></div>
<div class="t" style="left:1602.56px;top:352.20px;font-size:19px;color:#595959;transform:scaleX(0.9770);transform-origin:center 50%;">Project Closeout Meeting</div>
</body></html>
